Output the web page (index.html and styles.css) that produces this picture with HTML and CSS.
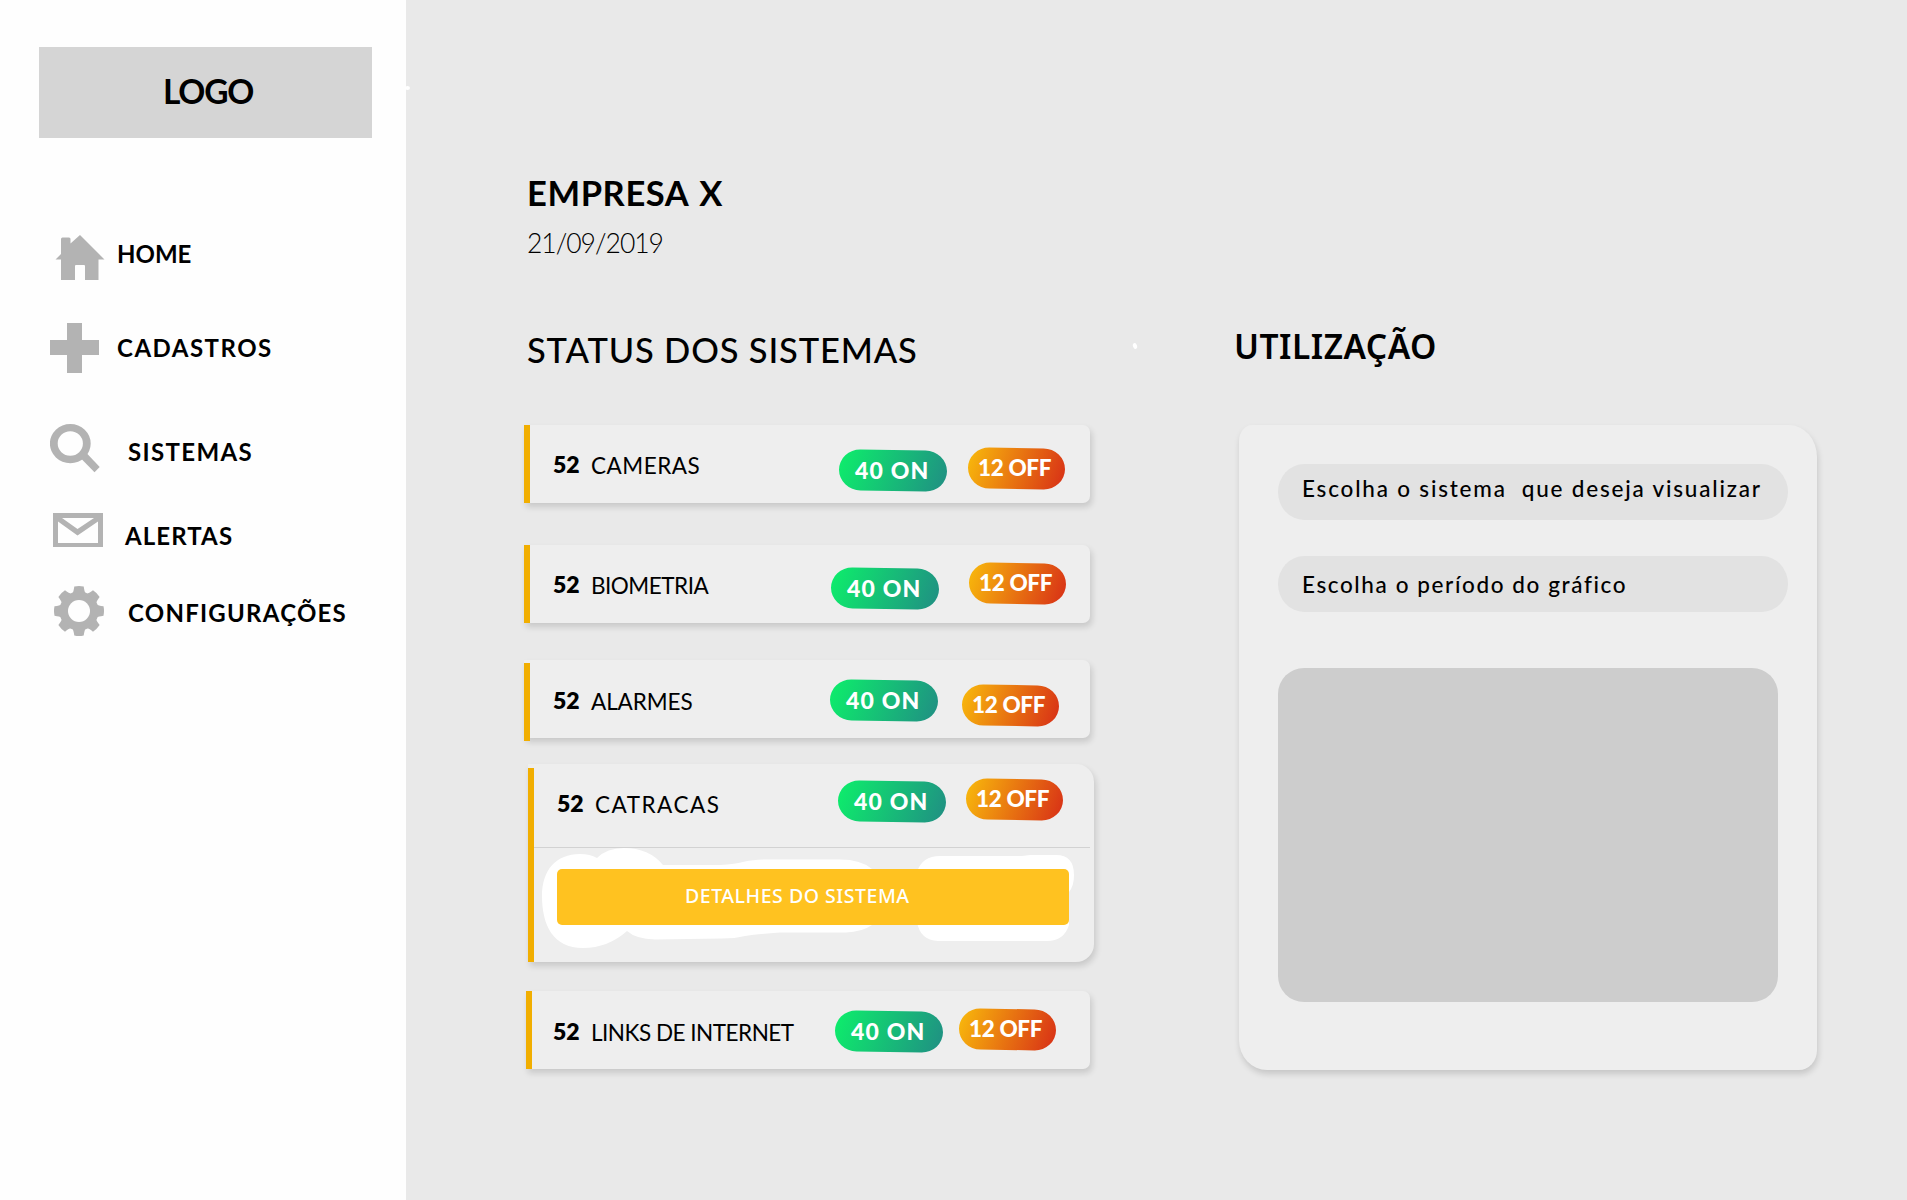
FILE: index.html
```html
<!DOCTYPE html>
<html lang="pt-BR">
<head>
<meta charset="utf-8">
<title>Empresa X</title>
<link rel="stylesheet" href="styles.css">
</head>
<body>
<div class="app">
  <aside class="sidebar">
    <div class="logo">LOGO</div>
    <nav class="nav">
      <a class="nav-item home"><svg class="icon" viewBox="0 0 50 50"><path d="M0.500 26.500 6 21V6q0-1.500 1.500-1.500h6.500q1.500 0 1.500 1.500v4.500L25 2 49.500 26.500H43.500V47H30V33q0-1-1-1H21q-1 0-1 1V47H6V26.500Z"/></svg><span class="t">HOME</span></a>
      <a class="nav-item cadastros"><svg class="icon" viewBox="0 0 50 50"><path d="M17 0H32V17H49V32H32V50H17V32H0V17H17Z"/></svg><span class="t">CADASTROS</span></a>
      <a class="nav-item sistemas"><svg class="icon" viewBox="0 0 50 50"><path fill-rule="evenodd" d="M20.300 1A20.300 19.500 0 1 1 20.300 40.200A20.300 19.500 0 1 1 20.300 1ZM20.300 8.300A12.600 12.200 0 1 0 20.300 32.700A12.600 12.200 0 1 0 20.300 8.300Z"/><path d="M31 35.500 36.500 30 49.700 44 44.500 49.300Z"/></svg><span class="t">SISTEMAS</span></a>
      <a class="nav-item alertas"><svg class="icon" viewBox="0 0 50 50"><path fill-rule="evenodd" d="M0 8H50V42H0ZM5 16.500V38H45V16.500L24.500 30.500ZM9 13 24.500 24 41 13Z"/></svg><span class="t">ALERTAS</span></a>
      <a class="nav-item config"><svg class="icon" viewBox="-25 -25 50 50"><circle r="19.500"/><path id="tooth" d="M-6.500-18Q-5.500-19-4.700-24.500Q0-25.500 4.700-24.500Q5.500-19 6.500-18Z"/><use href="#tooth" transform="rotate(45)"/><use href="#tooth" transform="rotate(90)"/><use href="#tooth" transform="rotate(135)"/><use href="#tooth" transform="rotate(180)"/><use href="#tooth" transform="rotate(225)"/><use href="#tooth" transform="rotate(270)"/><use href="#tooth" transform="rotate(315)"/><circle class="hole" r="11"/></svg><span class="t">CONFIGURAÇÕES</span></a>
    </nav>
  </aside>
  <main class="content">
    <i class="speck speck-a"></i><i class="speck speck-b"></i>
    <header class="company">
      <h1>EMPRESA X</h1>
      <p class="date">21/09/2019</p>
    </header>
    <div class="columns">
      <section class="status">
        <h2>STATUS DOS SISTEMAS</h2>
        <article class="card cameras"><b class="count">52</b><span class="name">CAMERAS</span><span class="pill on"><span class="t">40 ON</span></span><span class="pill off"><span class="t">12 OFF</span></span></article>
        <article class="card biometria"><b class="count">52</b><span class="name">BIOMETRIA</span><span class="pill on"><span class="t">40 ON</span></span><span class="pill off"><span class="t">12 OFF</span></span></article>
        <article class="card alarmes"><b class="count">52</b><span class="name">ALARMES</span><span class="pill on"><span class="t">40 ON</span></span><span class="pill off"><span class="t">12 OFF</span></span></article>
        <article class="card-open">
          <div class="row catracas"><b class="count">52</b><span class="name">CATRACAS</span><span class="pill on"><span class="t">40 ON</span></span><span class="pill off"><span class="t">12 OFF</span></span></div>
          <div class="details">
            <svg class="brush" viewBox="534 848 560 114"><path d="M542 896C542 870 556 854 580 854Q590 854 597 858Q607 848 624 848Q649 848 663 865H720Q735 864 745 861.500T775 859.500H840Q861 859.500 872 869V925Q862 932 846 932.500H780Q758 934 745 936Q735 938.500 722 938.500L655 939.500Q636 939 627 931Q608 948 583 948C553 948 542 925 542 896Z"/><path d="M917 872Q922 856 940 856H1022L1030 855H1056Q1074 855 1074 875Q1074 886 1069 892V925Q1064 941 1047 941H938Q920 940 917 922Z"/></svg>
            <button class="details-btn">DETALHES DO SISTEMA</button>
          </div>
        </article>
        <article class="card links"><b class="count">52</b><span class="name">LINKS DE INTERNET</span><span class="pill on"><span class="t">40 ON</span></span><span class="pill off"><span class="t">12 OFF</span></span></article>
      </section>
      <section class="usage">
        <h2>UTILIZAÇÃO</h2>
        <div class="panel">
          <div class="field system">Escolha o sistema&nbsp; que deseja visualizar</div>
          <div class="field period">Escolha o período do gráfico</div>
          <div class="chart"></div>
        </div>
      </section>
    </div>
  </main>
</div>
</body>
</html>
```
FILE: styles.css
```css
* { box-sizing: border-box; margin: 0; padding: 0; }
body { background: #e9e9e9; color: #000; font-family: Lato, sans-serif; }
.app { display: flex; width: 1907px; height: 1200px; overflow: hidden; }

.sidebar { flex: none; width: 406px; background: #fefefe; padding: 47px 0 0 39px; }
.logo { width: 333px; height: 91px; background: #d5d5d5; padding-left: 124px; font-size: 33.5px; line-height: 89px; font-weight: 700; letter-spacing: -1.2px; }
.nav { margin-top: 95px; }
.nav-item { display: flex; height: 50px; font-size: 24px; line-height: 50px; font-weight: 700; letter-spacing: 1.35px; }
.icon { flex: none; width: 50px; height: 50px; fill: #b3b3b3; }
.hole { fill: #fefefe; }
.home { padding-left: 16px; letter-spacing: 0; }
.home .t { margin: -4px 0 0 12px; }
.cadastros { margin-top: 40px; padding-left: 11px; letter-spacing: 1.5px; }
.cadastros .t { margin-left: 17px; }
.sistemas { margin-top: 50px; padding-left: 11px; }
.sistemas .t { margin: 4px 0 0 28px; }
.alertas { margin-top: 32px; padding-left: 14px; letter-spacing: 1.1px; }
.alertas .t { margin: 6px 0 0 22px; }
.config { margin-top: 31px; padding-left: 15px; letter-spacing: 1.25px; }
.config .t { margin: 2px 0 0 24px; }

.content { position: relative; flex: 1; padding: 173px 0 0 118px; }
.speck { position: absolute; background: #fff; border-radius: 50%; }
.speck-a { left: -1px; top: 86px; width: 5px; height: 4px; }
.speck-b { left: 727px; top: 343px; width: 4px; height: 6px; transform: rotate(-20deg); }
.company { padding-left: 3px; }
h1 { font-size: 34.5px; line-height: 40px; font-weight: 700; letter-spacing: .6px; word-spacing: 2px; }
.date { margin-top: 10px; font-size: 26.5px; line-height: 41px; font-weight: 300; letter-spacing: -1px; }
.columns { display: flex; }
.status { width: 570px; margin-top: 66px; }
h2 { font-size: 34.5px; line-height: 40px; font-weight: 500; white-space: nowrap; }
.status h2 { padding-left: 3px; letter-spacing: .83px; }

.card, .card-open { background: #eee; box-shadow: 2px 4px 6px rgba(0, 0, 0, .14); }
.card, .row { display: flex; align-items: flex-start; position: relative; }
.card { width: 566px; height: 78px; padding-left: 6px; border-radius: 0 7px 7px 0; }
.card::before, .card-open::before { content: ""; position: absolute; left: 0; top: 0; width: 6px; height: 100%; background: #f1ae00; }
.count { width: 38px; margin: 29px 0 0 23px; font-size: 23px; line-height: 20px; font-weight: 800; }
.name { flex: 1; margin-top: 31px; font-size: 22.5px; line-height: 20px; white-space: nowrap; }
.pill { display: block; height: 41px; color: #fff; font-size: 23px; line-height: 40px; font-weight: 900; border-radius: 22px / 21px; transform: skewY(.8deg); white-space: nowrap; }
.pill .t { display: inline-block; transform: skewY(-.8deg); }
.on { width: 108px; padding-left: 16px; letter-spacing: 1.2px; background: linear-gradient(110deg, #0eea6c 5%, #1f9382 95%); }
.off { width: 97px; padding-left: 10px; font-size: 22.5px; letter-spacing: -.35px; background: linear-gradient(110deg, #f7b40c 5%, #d93516 95%); }
.cameras { margin-top: 55px; }
.cameras .name { letter-spacing: .5px; }
.cameras .on { margin: 25px 21px 0 0; }
.cameras .off { margin: 23px 25px 0 0; }
.biometria { margin-top: 42px; }
.biometria .name { letter-spacing: -.5px; }
.biometria .on { margin: 23px 30px 0 0; }
.biometria .off { margin: 18px 24px 0 0; }
.alarmes { margin-top: 37px; }
.alarmes::before { top: 3px; }
.alarmes .count { margin-top: 30px; }
.alarmes .name { margin-top: 32px; letter-spacing: -.1px; }
.alarmes .on { margin: 20px 24px 0 0; }
.alarmes .off { margin: 25px 31px 0 0; }
.card-open { position: relative; width: 566px; height: 198px; margin: 26px 0 0 4px; padding-left: 6px; border-radius: 0 18px 18px 0; }
.card-open::before { top: 4px; height: 194px; }
.row { height: 84px; border-bottom: 1px solid #d2d2d2; margin-right: 4px; }
.catracas .name { letter-spacing: 1.5px; }
.catracas .on { margin: 17px 20px 0 0; }
.catracas .off { margin: 15px 27px 0 0; }
.details { position: relative; padding: 21px 0 0 23px; }
.brush { position: absolute; left: 0; top: 0; width: 560px; height: 114px; fill: #fff; }
.details-btn { position: relative; display: block; width: 512px; height: 56px; border: 0; border-radius: 5px; background: #ffc220; color: #fff; padding: 0 0 2px 128px; text-align: left; font: 500 19.5px/54px "Noto Sans", sans-serif; letter-spacing: .53px; }
.links { margin: 29px 0 0 2px; width: 564px; }
.links .count { margin: 30px 0 0 21px; }
.links .name { margin-top: 32px; letter-spacing: -.5px; }
.links .on { margin: 20px 16px 0 0; }
.links .off { margin: 18px 34px 0 0; }

.usage { margin: 62px 0 0 141px; width: 582px; }
.usage h2 { margin-left: -1px; font-family: "Noto Sans", sans-serif; font-size: 33.5px; line-height: 41px; font-weight: 600; letter-spacing: .5px; }
.panel { width: 578px; height: 645px; margin: 58px 0 0 4px; padding: 39px; background: #eee; border-radius: 13px 28px 18px 28px / 16px 32px 20px 30px; box-shadow: 1px 4px 6px rgba(0, 0, 0, .15); }
.field { width: 510px; height: 56px; border-radius: 26px / 28px; background: #e2e2e2; padding-left: 24px; font-size: 22.5px; font-weight: 500; letter-spacing: 1.8px; white-space: nowrap; }
.system { line-height: 49px; }
.period { margin-top: 36px; line-height: 58px; letter-spacing: 1.6px; }
.chart { width: 500px; height: 334px; margin-top: 56px; border-radius: 26px; background: #cdcdcd; }
```
